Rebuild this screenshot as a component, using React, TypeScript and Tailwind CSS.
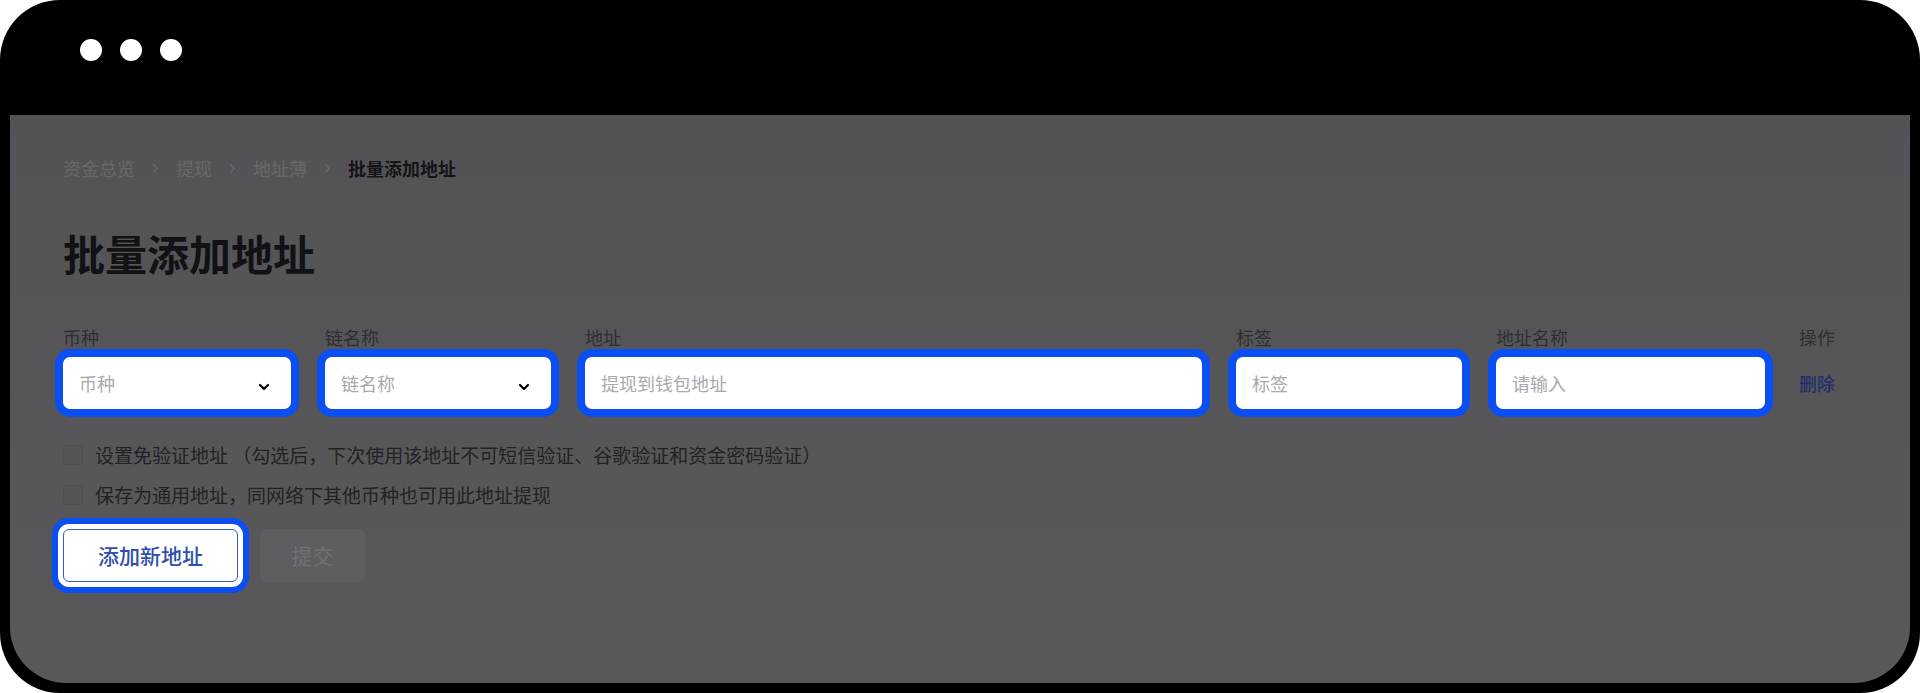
import { ChevronDown, ChevronRight } from "lucide-react";

const font = { fontFamily: '"Noto Sans CJK SC", "Noto Sans", sans-serif' };

const crumbs = ["资金总览", "提现", "地址薄"];

const fields = [
  { label: "币种", placeholder: "币种", width: "w-[228px]", select: true },
  { label: "链名称", placeholder: "链名称", width: "w-[226px]", select: true },
  { label: "地址", placeholder: "提现到钱包地址", width: "w-[617px]", select: false },
  { label: "标签", placeholder: "标签", width: "w-[226px]", select: false },
  { label: "地址名称", placeholder: "请输入", width: "w-[269px]", select: false },
];

const options = [
  "设置免验证地址 （勾选后，下次使用该地址不可短信验证、谷歌验证和资金密码验证）",
  "保存为通用地址，同网络下其他币种也可用此地址提现",
];

export default function App() {
  return (
    <div className="h-[693px] w-[1920px] overflow-hidden bg-white" style={font}>
      <div className="flex h-full flex-col rounded-[60px] bg-black px-[10px] pb-[10px]">
        <div className="flex h-[115px] shrink-0 gap-[18px] pl-[70px] pt-[39px]">
          <span className="size-[22px] rounded-full bg-white" />
          <span className="size-[22px] rounded-full bg-white" />
          <span className="size-[22px] rounded-full bg-white" />
        </div>

        <main className="flex-1 rounded-b-[56px] bg-gradient-to-b from-[#535357] to-[#59595a] pl-[53px] pt-[41px]">
          <nav className="flex h-[24px] items-center gap-[13px] text-[18px] leading-[24px] text-[#68686c]">
            {crumbs.map((c) => (
              <div key={c} className="flex items-center gap-[13px]">
                <span>{c}</span>
                <ChevronRight size={15} strokeWidth={2} />
              </div>
            ))}
            <span className="font-bold text-[#141416]">批量添加地址</span>
          </nav>

          <h1 className="mt-[48px] text-[42px] font-bold leading-[50px] text-[#121214]">批量添加地址</h1>

          <div className="mt-[47px] flex gap-[34px]">
            {fields.map((f) => (
              <div key={f.label} className={`flex flex-col gap-[8px] ${f.width}`}>
                <span className="text-[18px] leading-[24px] text-[#2e2e31]">{f.label}</span>
                <div className="flex h-[52px] items-center justify-between rounded-[7px] bg-white pl-[16px] pr-[19px] shadow-[0_0_0_8px_#0b4ff2]">
                  <span className="text-[18px] text-[#a9a9ae]">{f.placeholder}</span>
                  {f.select && <ChevronDown className="mt-[8px] text-black" size={16} strokeWidth={3.2} />}
                </div>
              </div>
            ))}
            <div className="flex flex-col gap-[8px]">
              <span className="text-[18px] leading-[24px] text-[#2e2e31]">操作</span>
              <span className="flex h-[52px] items-center text-[18px] font-medium text-[#222f6c]">删除</span>
            </div>
          </div>

          <div className="mt-[34px] flex flex-col gap-[16px]">
            {options.map((o) => (
              <label key={o} className="flex h-[24px] items-center gap-[12px] text-[19px] leading-[24px] text-[#222224]">
                <span className="size-[20px] rounded-[4px] border border-[#4e4e54] bg-[#545458]" />
                <span className="whitespace-pre">{o}</span>
              </label>
            ))}
          </div>

          <div className="mt-[22px] flex gap-[22px]">
            <button className="h-[53px] w-[175px] rounded-[6px] border-[1.5px] border-[#3a5ab5] bg-white text-[21px] font-medium text-[#2e4eae] shadow-[0_0_0_5px_#fff,0_0_0_11px_#0b4ff2]">
              添加新地址
            </button>
            <button className="h-[53px] w-[105px] rounded-[6px] bg-[#5e5e62] text-[21px] text-[#707074]">提交</button>
          </div>
        </main>
      </div>
    </div>
  );
}
